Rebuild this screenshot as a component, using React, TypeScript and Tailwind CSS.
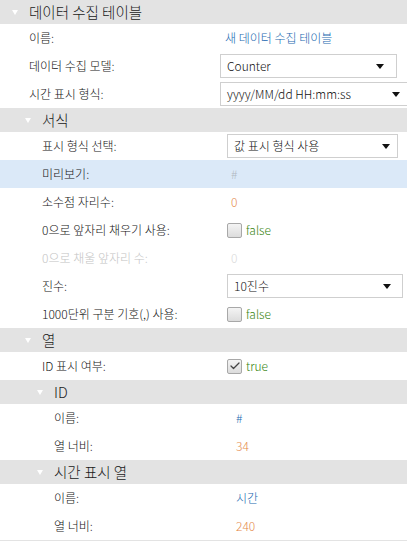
import { Check } from 'lucide-react';

type Level = 0 | 1 | 2;

const labelPad: Record<Level, string> = {
  0: 'pl-[29px]',
  1: 'pl-[42px]',
  2: 'pl-[54px]',
};

const valueCol: Record<Level, string> = {
  0: 'w-[225px]',
  1: 'w-[227px]',
  2: 'w-[236px]',
};

const headPad: Record<Level, string> = {
  0: 'pl-[12px]',
  1: 'pl-[25px]',
  2: 'pl-[37px]',
};

function Section({ title, level }: { title: string; level: Level }) {
  return (
    <div className={`h-6 flex items-center bg-[#e3e3e3] ${headPad[level]}`}>
      <svg width="6" height="5" viewBox="0 0 6 5" className="mr-[11px]">
        <path d="M0 0 L6 0 L3 5 Z" fill="#ffffff" />
      </svg>
      <span className="text-[14.5px] text-[#1a1a1a]">{title}</span>
    </div>
  );
}

function Row({
  label,
  level,
  children,
  dim,
  selected,
}: {
  label: string;
  level: Level;
  children?: React.ReactNode;
  dim?: boolean;
  selected?: boolean;
}) {
  return (
    <div className={`h-7 flex items-center ${selected ? 'bg-[#dbe9f8]' : 'bg-white'}`}>
      <div className={`shrink-0 ${valueCol[level]} ${labelPad[level]} ${dim ? 'text-[#c4c4c4]' : 'text-[#141414]'}`}>
        {label}
      </div>
      <div className="flex-1 flex items-center min-w-0">{children}</div>
    </div>
  );
}

function Select({ value, width, arrowPad }: { value: string; width: string; arrowPad: string }) {
  return (
    <div className={`h-[24px] ${width} shrink-0 border border-[#cfcfcf] bg-white flex items-center justify-between pl-[6px] ${arrowPad}`}>
      <span className="text-[#111]">{value}</span>
      <svg width="8" height="5" viewBox="0 0 8 5">
        <path d="M0 0 L8 0 L4 5 Z" fill="#111" />
      </svg>
    </div>
  );
}

function CheckField({ checked }: { checked: boolean }) {
  return (
    <div className="flex items-center gap-[4px]">
      <div className="w-[15px] h-[15px] rounded-[2px] border border-[#a8a8a8] bg-gradient-to-b from-[#f4f4f4] to-[#dcdcdc] flex items-center justify-center">
        {checked && <Check className="w-[12px] h-[12px] text-[#444]" strokeWidth={2.5} />}
      </div>
      <span className="text-[#36840f]">{checked ? 'true' : 'false'}</span>
    </div>
  );
}

export default function App() {
  return (
    <div
      className="w-[407px] h-[541px] bg-white text-[12px] font-light leading-none overflow-hidden"
      style={{ fontFamily: '"Noto Sans CJK KR", "Noto Sans", sans-serif' }}
    >
      <Section title="데이터 수집 테이블" level={0} />
      <Row label="이름:" level={0}>
        <span className="text-[#1a68b0]">새 데이터 수집 테이블</span>
      </Row>
      <Row label="데이터 수집 모델:" level={0}>
        <div className="-ml-[5px]">
          <Select value="Counter" width="w-[177px]" arrowPad="pr-[12px]" />
        </div>
      </Row>
      <Row label="시간 표시 형식:" level={0}>
        <div className="-ml-[5px]">
          <Select value="yyyy/MM/dd HH:mm:ss" width="w-[192px]" arrowPad="pr-[11px]" />
        </div>
      </Row>

      <Section title="서식" level={1} />
      <Row label="표시 형식 선택:" level={1}>
        <Select value="값 표시 형식 사용" width="w-[171px]" arrowPad="pr-[7px]" />
      </Row>
      <Row label="미리보기:" level={1} selected>
        <span className="pl-[4px] text-[#b0b8c0]">#</span>
      </Row>
      <Row label="소수점 자리수:" level={1}>
        <span className="pl-[4px] text-[#e58a4c]">0</span>
      </Row>
      <Row label="0으로 앞자리 채우기 사용:" level={1}>
        <CheckField checked={false} />
      </Row>
      <Row label="0으로 채울 앞자리 수:" level={1} dim>
        <span className="pl-[4px] text-[#dadada]">0</span>
      </Row>
      <Row label="진수:" level={1}>
        <Select value="10진수" width="w-[176px]" arrowPad="pr-[11px]" />
      </Row>
      <Row label="1000단위 구분 기호(,) 사용:" level={1}>
        <CheckField checked={false} />
      </Row>

      <Section title="열" level={1} />
      <Row label="ID 표시 여부:" level={1}>
        <CheckField checked />
      </Row>
      <Section title="ID" level={2} />
      <Row label="이름:" level={2}>
        <span className="text-[#1a68b0]">#</span>
      </Row>
      <Row label="열 너비:" level={2}>
        <span className="text-[#e58a4c]">34</span>
      </Row>
      <Section title="시간 표시 열" level={2} />
      <Row label="이름:" level={2}>
        <span className="text-[#1a68b0]">시간</span>
      </Row>
      <Row label="열 너비:" level={2}>
        <span className="text-[#e58a4c]">240</span>
      </Row>
      <div className="h-[1px] bg-[#e3e3e3]" />
    </div>
  );
}
